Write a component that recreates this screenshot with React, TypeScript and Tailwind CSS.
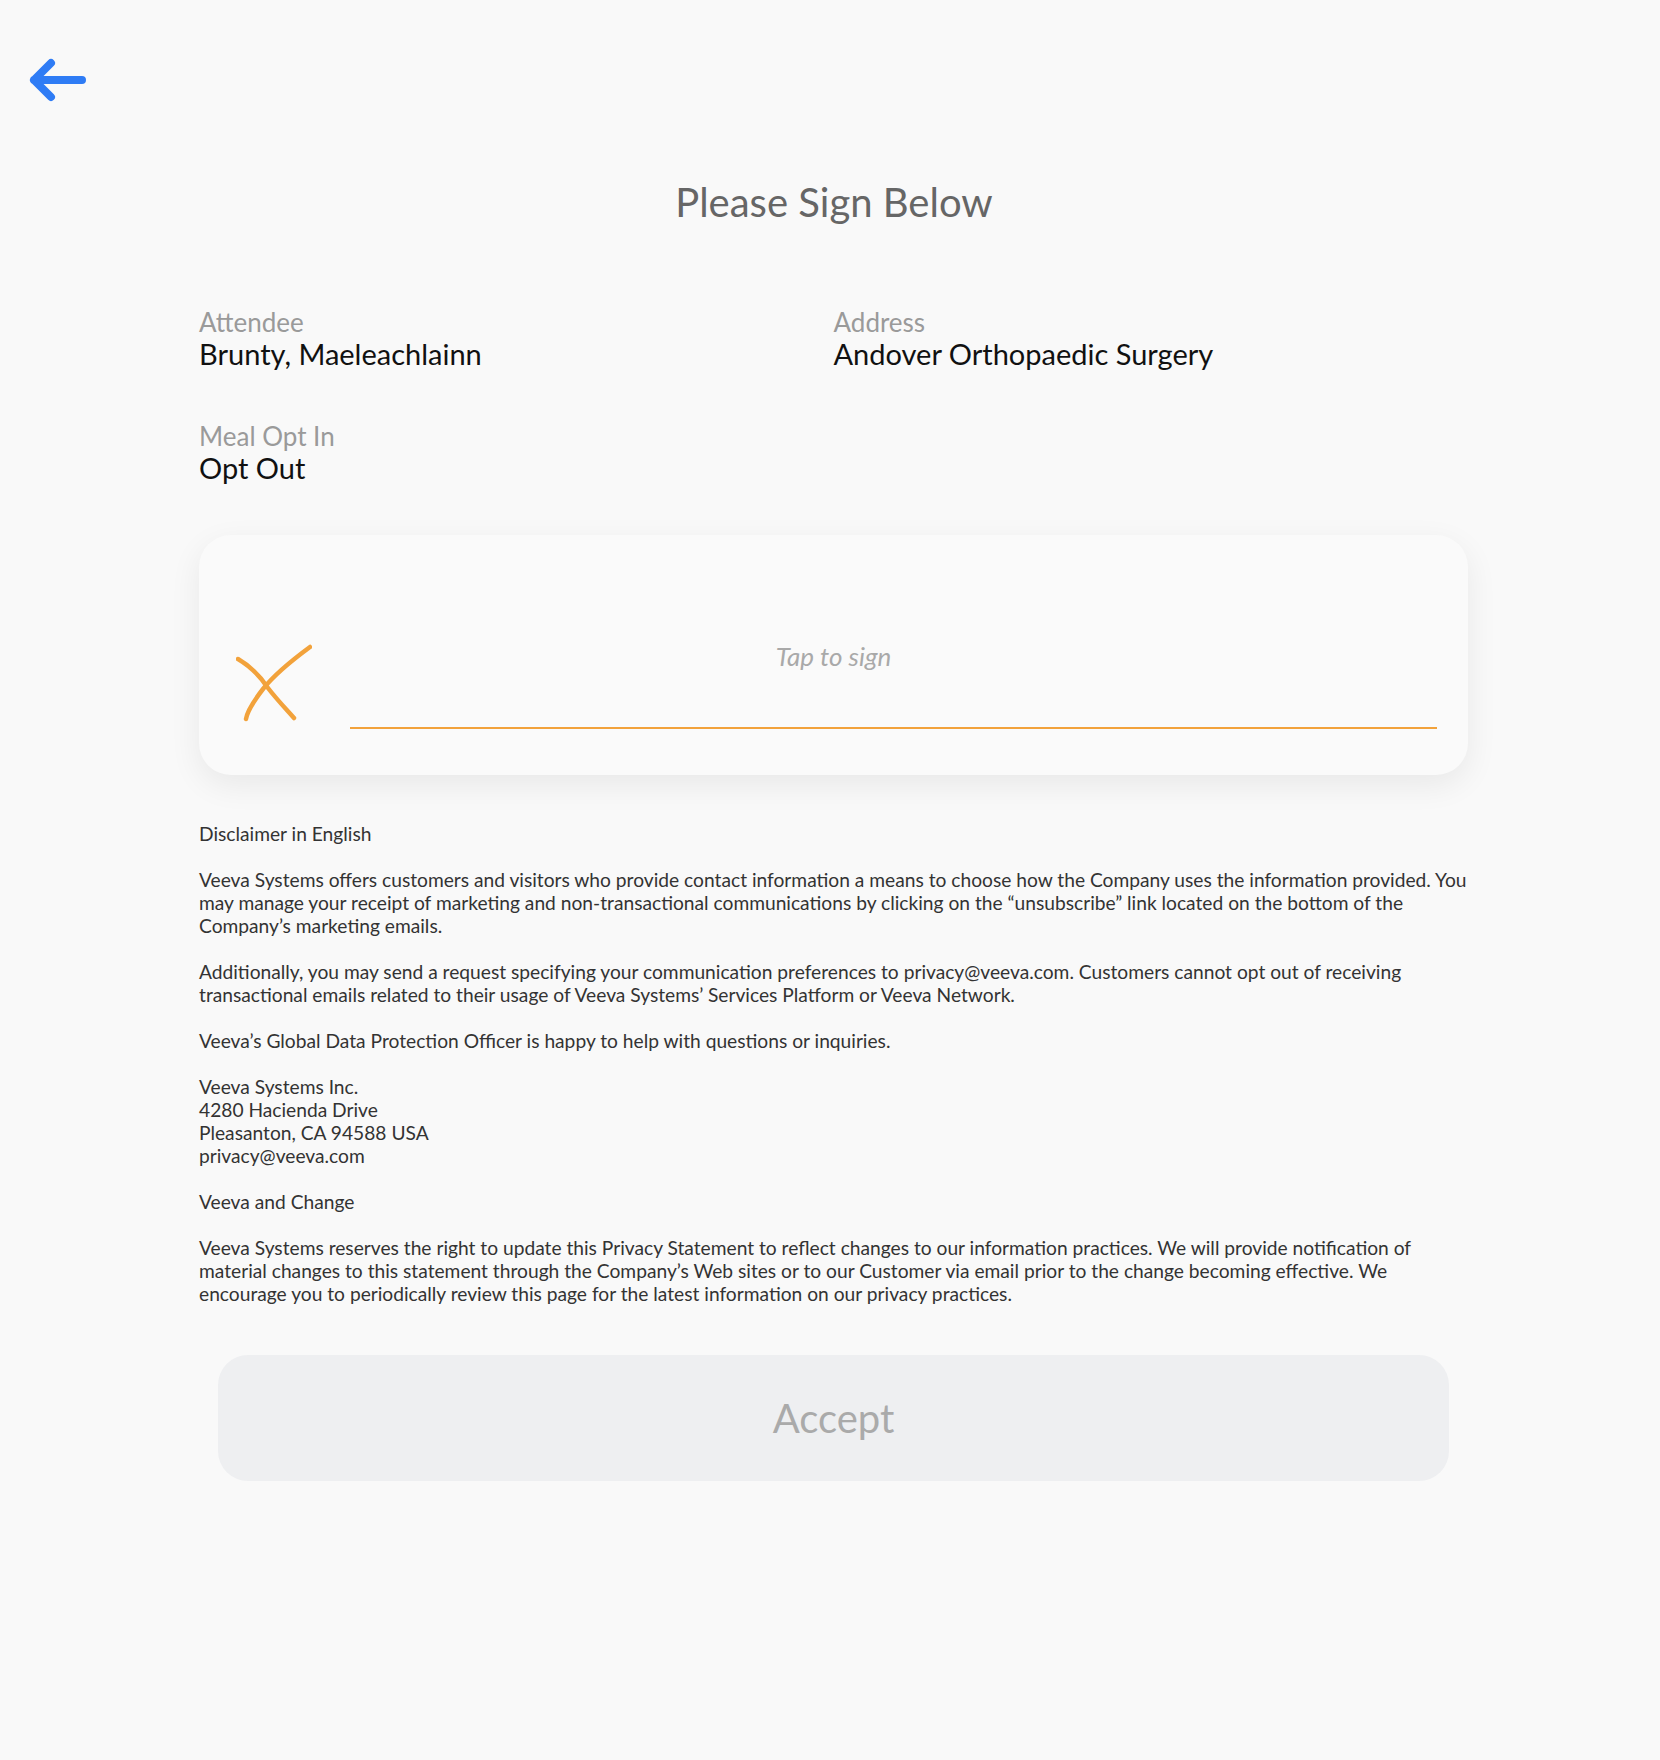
import React from 'react'

const BackArrow: React.FC = () => (
    <svg width="64" height="50" viewBox="0 0 64 50" fill="none">
        <path d="M56 25H8M25 8L8 25L25 42" stroke="#2f7cf5" strokeWidth="8" strokeLinecap="round" strokeLinejoin="round" />
    </svg>
)

const SignMark: React.FC = () => (
    <svg width="76" height="78" viewBox="0 0 76 78" fill="none">
        <path d="M74 3C55 17 38 31 27 45C17 58 11 68 10 75" stroke="#f2a23b" strokeWidth="4.5" strokeLinecap="round" />
        <path d="M2 15C14 22 24 32 32 44C42 57 52 67 58 74" stroke="#f2a23b" strokeWidth="4.5" strokeLinecap="round" />
    </svg>
)

const Field: React.FC<{ label: string; value: string }> = ({ label, value }) => (
    <div>
        <div className="text-[26px] leading-[30px] text-[#9a9a9a]">{label}</div>
        <div className="text-[29px] leading-[34px] text-[#111]">{value}</div>
    </div>
)

const App: React.FC = () => {
    return (
        <div className="min-h-screen bg-[#f9f9f9] font-['Lato',sans-serif]">
            <div className="pt-[55px] pl-[26px]">
                <BackArrow />
            </div>

            <h1 className="mt-[73px] pl-[8px] text-center text-[40px] leading-[48px] text-[#666]">Please Sign Below</h1>

            <div className="mt-[81px] ml-[199px] w-[1269px]">
                <div className="grid grid-cols-2 gap-y-[50px]">
                    <Field label="Attendee" value="Brunty, Maeleachlainn" />
                    <Field label="Address" value="Andover Orthopaedic Surgery" />
                    <Field label="Meal Opt In" value="Opt Out" />
                </div>

                <div className="relative mt-[50px] flex h-[240px] items-end rounded-[32px] bg-[#fafafa] pb-[46px] shadow-[0_10px_32px_rgba(0,0,0,0.07)]">
                    <div className="absolute inset-x-0 top-[106px] text-center text-[26px] leading-[30px] italic text-[#a9a9a9]">Tap to sign</div>
                    <div className="ml-[37px] mb-[7px]">
                        <SignMark />
                    </div>
                    <div className="ml-[38px] mr-[31px] h-[2px] flex-1 bg-[#f2a23b]" />
                </div>

                <div className="mt-[47px] w-[1274px] text-[19.2px] leading-[23px] text-[#333] space-y-[23px]">
                    <p>Disclaimer in English</p>
                    <p>
                        Veeva Systems offers customers and visitors who provide contact information a means to choose how the Company uses the information provided. You may manage your receipt of marketing and non-transactional communications by clicking on the “unsubscribe” link located on the bottom of the Company’s marketing emails.
                    </p>
                    <p>
                        Additionally, you may send a request specifying your communication preferences to privacy@veeva.com. Customers cannot opt out of receiving transactional emails related to their usage of Veeva Systems’ Services Platform or Veeva Network.
                    </p>
                    <p>Veeva’s Global Data Protection Officer is happy to help with questions or inquiries.</p>
                    <p>
                        Veeva Systems Inc.
                        <br />
                        4280 Hacienda Drive
                        <br />
                        Pleasanton, CA 94588 USA
                        <br />
                        privacy@veeva.com
                    </p>
                    <p>Veeva and Change</p>
                    <p>
                        Veeva Systems reserves the right to update this Privacy Statement to reflect changes to our information practices. We will provide notification of material changes to this statement through the Company’s Web sites or to our Customer via email prior to the change becoming effective. We encourage you to periodically review this page for the latest information on our privacy practices.
                    </p>
                </div>

                <div className="mt-[50px] px-[19px]">
                    <button className="flex h-[126px] w-full items-center justify-center rounded-[30px] bg-[#eeeff1] text-[40px] text-[#aaa]">
                        Accept
                    </button>
                </div>
            </div>
        </div>
    )
}

export default App
